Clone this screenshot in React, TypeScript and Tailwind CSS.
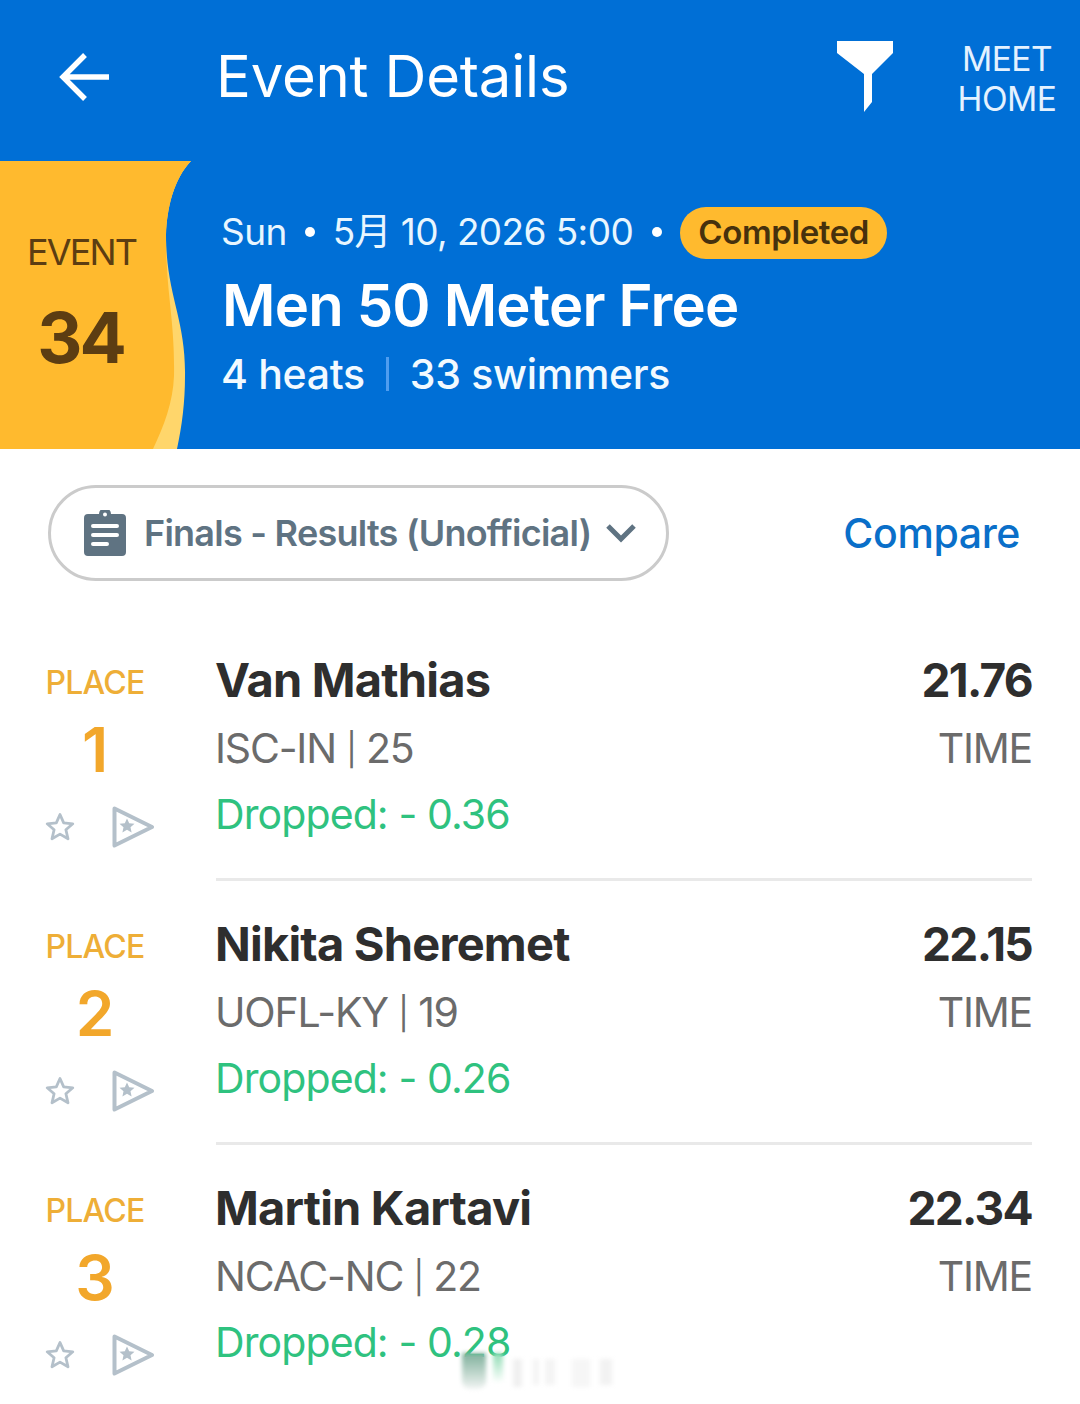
const font = { fontFamily: '"Inter", "Noto Sans CJK SC", sans-serif' };

function Star({ className, fill = "none" }: { className?: string; fill?: string }) {
  return (
    <svg viewBox="0 0 32 32" className={className}>
      <path
        d="M16 3.5l3.7 8.4 9.1.9-6.9 6 2.1 9-8-4.7-8 4.7 2.1-9-6.9-6 9.1-.9z"
        fill={fill}
        stroke="#b4c0ca"
        strokeWidth="2.8"
        strokeLinejoin="round"
      />
    </svg>
  );
}

function Flag() {
  return (
    <svg viewBox="0 0 44 42" className="w-[44px] h-[42px]">
      <path d="M2.5 2.5L40 21 2.5 39.5z" fill="none" stroke="#b4c0ca" strokeWidth="4" strokeLinejoin="round" />
      <path d="M15 12.5l2.2 4.7 5.3.6-4 3.5 1.1 5.1-4.6-2.7-4.6 2.7 1.1-5.1-4-3.5 5.3-.6z" fill="#b4c0ca" />
    </svg>
  );
}

function Row({ place, name, club, age, drop, time, last }: { place: string; name: string; club: string; age: string; drop: string; time: string; last?: boolean }) {
  return (
    <div className="flex h-[264px]">
      <div className="w-[190px] shrink-0 flex flex-col items-center pt-[15px]">
        <div className="text-[32px] leading-[36px] font-medium text-[#eeae37] tracking-[-0.8px]">PLACE</div>
        <div className="text-[62px] leading-[64px] mt-[17px] font-semibold text-[#f2a72b]">{place}</div>
        <div className="flex items-center gap-[36px] mt-[24px] ml-[10px]">
          <Star className="w-[32px] h-[32px]" />
          <Flag />
        </div>
      </div>
      <div className={`flex-1 ml-[26px] mr-[48px] flex justify-between h-[231px] ${last ? "" : "border-b-[3px] border-[#e9e9e9]"}`}>
        <div className="-ml-[1px]">
          <div className="text-[47px] leading-[60px] font-bold text-[#2e2e2e] tracking-[-0.8px]">{name}</div>
          <div className="text-[41px] leading-[60px] mt-[8px] text-[#6b6b6b] tracking-[-1.2px]">
            {club} <span className="text-[32px] relative top-[-2px]">|</span> {age}
          </div>
          <div className="text-[41px] leading-[60px] mt-[2px] text-[#2fc27f] tracking-[-0.9px]">{drop}</div>
        </div>
        <div className="text-right">
          <div className="text-[46px] leading-[60px] font-bold text-[#2e2e2e] tracking-[-1.7px]">{time}</div>
          <div className="text-[41px] leading-[60px] mt-[8px] text-[#6b6b6b] tracking-[-1.2px]">TIME</div>
        </div>
      </div>
    </div>
  );
}

export default function App() {
  return (
    <div className="relative w-[1080px] h-[1404px] bg-white overflow-hidden" style={font}>
      <div className="bg-[#006fd6] text-white">
        <div className="flex items-center h-[161px]">
          <div className="w-[216px] pl-[59px] shrink-0 pb-[8px]">
            <svg viewBox="0 0 52 52" className="w-[52px] h-[52px]">
              <path d="M50 26H6M26 4L4 26l22 22" fill="none" stroke="white" strokeWidth="5.4" />
            </svg>
          </div>
          <div className="flex-1 text-[58px] leading-[70px] tracking-[-0.2px] pb-[10px] font-normal">Event Details</div>
          <svg viewBox="0 0 58 72" className="w-[58px] h-[72px] mr-[63px] mt-[-10px]">
            <path d="M1 1h56v12L36 34v28l-8 10V34L1 13z" fill="white" />
          </svg>
          <div className="w-[100px] mr-[23px] text-center text-[33.5px] leading-[40px] tracking-[-0.5px] text-[#e4f2ff] pb-[4px]">
            MEET<br />HOME
          </div>
        </div>
        <div className="flex h-[288px]">
          <div className="relative w-[192px] shrink-0">
            <svg viewBox="0 0 192 288" className="absolute inset-0 w-[192px] h-[288px]">
              <path d="M0 0H191C174 18 167 46 166 74c0 60 20 84 19 141 0 26-3 50-8 73H0z" fill="#ffd66b" />
              <path d="M0 0H191C174 18 167 46 166 74c0 60 9 84 8 141-1 26-10 50-21 73H0z" fill="#ffba2e" />
            </svg>
            <div className="relative w-[163px] flex flex-col items-center text-[#5c3d12]">
              <div className="text-[36px] leading-[44px] mt-[69px] tracking-[-1.9px]">EVENT</div>
              <div className="text-[70px] leading-[70px] mt-[29px] -ml-[2px] font-bold tracking-[-3px]">34</div>
            </div>
          </div>
          <div className="pl-[30px]">
            <div className="flex items-center mt-[46px] h-[52px] text-[37px] tracking-[-0.6px] text-[#e8f6ff]">
              <span className="-ml-[1px] -mt-[2px]">Sun</span>
              <span className="w-[10px] h-[10px] rounded-full bg-white ml-[18px] mr-[18px] -mt-[2px]" />
              <span className="-mt-[2px]">5月 10, 2026 5:00</span>
              <span className="w-[10px] h-[10px] rounded-full bg-white ml-[19px] mr-[18px] -mt-[2px]" />
              <span className="h-[52px] w-[207px] flex items-center justify-center rounded-full bg-[#ffba2e] text-[33px] font-semibold text-[#46310d] tracking-[-0.4px]">Completed</span>
            </div>
            <div className="text-[58px] leading-[68px] mt-[12px] font-semibold tracking-[-0.8px]">Men 50 Meter Free</div>
            <div className="flex items-center text-[41px] leading-[50px] mt-[10px] -ml-[1px] font-medium tracking-[-0.3px] text-[#f2faff]">
              <span>4 heats</span>
              <span className="w-[3px] h-[34px] bg-[#4f9df0] mx-[21px]" />
              <span>33 swimmers</span>
            </div>
          </div>
        </div>
      </div>

      <div className="flex items-center justify-between pl-[48px] pr-[60px] mt-[36px]">
        <div className="flex items-center w-[621px] h-[96px] rounded-full border-[3px] border-[#cbcbcb] pl-[33px]">
          <svg viewBox="0 0 42 46" className="w-[42px] h-[46px]">
            <path d="M4 4h11a6 6 0 0 1 12 0h11a4 4 0 0 1 4 4v34a4 4 0 0 1-4 4H4a4 4 0 0 1-4-4V8a4 4 0 0 1 4-4z" fill="#5f7382" />
            <circle cx="21" cy="4.5" r="2" fill="white" />
            <path d="M9 16h24M9 25h24M9 34h14" stroke="white" strokeWidth="4" strokeLinecap="round" />
          </svg>
          <span className="ml-[18px] text-[36px] font-semibold text-[#5f7382] tracking-[-0.75px] whitespace-nowrap">Finals - Results (Unofficial)</span>
          <svg viewBox="0 0 32 20" className="w-[32px] h-[20px] ml-[14px]">
            <path d="M3 3l13 13L29 3" fill="none" stroke="#5f7382" strokeWidth="5" />
          </svg>
        </div>
        <span className="text-[41px] leading-[48px] font-medium text-[#0a6fc9] tracking-[-0.4px]">Compare</span>
      </div>

      <div className="mt-[69px]">
        <Row place="1" name="Van Mathias" club="ISC-IN" age="25" drop="Dropped: - 0.36" time="21.76" />
        <Row place="2" name="Nikita Sheremet" club="UOFL-KY" age="19" drop="Dropped: - 0.26" time="22.15" />
        <Row place="3" name="Martin Kartavi" club="NCAC-NC" age="22" drop="Dropped: - 0.28" time="22.34" last />
      </div>

      <div className="absolute left-[462px] top-[1353px] flex items-start blur-[2px]">
        <div className="w-[24px] h-[36px] bg-gradient-to-b from-[#7fb09c] to-[#f2f5f4] rounded-b-lg" />
        <div className="w-[10px] h-[30px] ml-[7px] bg-gradient-to-b from-[#8fdcb6] to-white" />
        <div className="w-[9px] h-[28px] ml-[10px] mt-[6px] bg-[#f0f0f0]" />
        <div className="w-[6px] h-[26px] ml-[11px] mt-[6px] bg-[#f4f4f4]" />
        <div className="w-[10px] h-[26px] ml-[6px] mt-[6px] bg-[#f4f4f4]" />
        <div className="w-[18px] h-[28px] ml-[17px] mt-[6px] bg-[#f6f6f6]" />
        <div className="w-[12px] h-[26px] ml-[10px] mt-[6px] bg-[#f2f2f2]" />
      </div>
    </div>
  );
}
